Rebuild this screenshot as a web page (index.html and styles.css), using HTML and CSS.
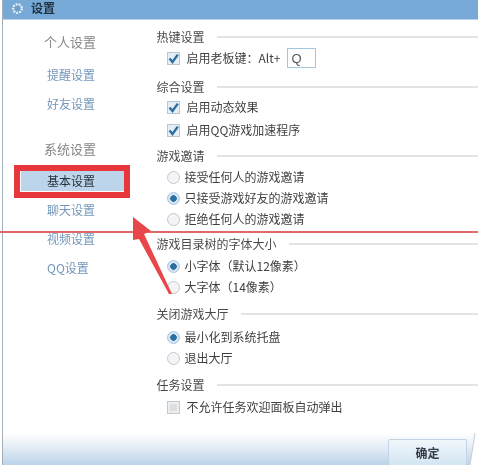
FILE: index.html
```html
<!DOCTYPE html>
<html lang="zh-CN">
<head>
<meta charset="utf-8">
<title>设置</title>
<link rel="stylesheet" href="styles.css">
</head>
<body>
<div class="window">
  <header class="titlebar">
    <svg class="gear" viewBox="0 0 16 16" width="15" height="15"><circle cx="8" cy="8" r="4.6" fill="none" stroke="#e4eef6" stroke-width="2.6" stroke-dasharray="2 1.2"/><circle cx="8" cy="8" r="3" fill="#6f9fc8"/></svg>
    <span class="title">设置</span>
  </header>
  <div class="content">
    <nav class="sidebar">
      <div class="group-title first">个人设置</div>
      <a class="link l1">提醒设置</a>
      <a class="link l2">好友设置</a>
      <div class="group-title second">系统设置</div>
      <a class="link active">基本设置</a>
      <a class="link l3">聊天设置</a>
      <a class="link l3">视频设置</a>
      <a class="link l3">QQ设置</a>
    </nav>
    <main class="main">
      <div class="head">热键设置</div>
      <div class="row mt3">
        <svg class="check" viewBox="0 0 13 13"><rect x=".5" y=".5" width="12" height="12" fill="#e6eef5" stroke="#b9c7d3"/><path d="M2.5 6.5 5.5 10 10.8 2.6" fill="none" stroke="#2f6f9f" stroke-width="2.4"/></svg>
        <span>启用老板键：Alt+</span>
        <input class="key" type="text" value="Q">
      </div>
      <div class="head mt11">综合设置</div>
      <div class="row mt2">
        <svg class="check" viewBox="0 0 13 13"><rect x=".5" y=".5" width="12" height="12" fill="#e6eef5" stroke="#b9c7d3"/><path d="M2.5 6.5 5.5 10 10.8 2.6" fill="none" stroke="#2f6f9f" stroke-width="2.4"/></svg>
        <span>启用动态效果</span>
      </div>
      <div class="row mt5">
        <svg class="check" viewBox="0 0 13 13"><rect x=".5" y=".5" width="12" height="12" fill="#e6eef5" stroke="#b9c7d3"/><path d="M2.5 6.5 5.5 10 10.8 2.6" fill="none" stroke="#2f6f9f" stroke-width="2.4"/></svg>
        <span>启用QQ游戏加速程序</span>
      </div>
      <div class="head mt8">游戏邀请</div>
      <div class="row radio-row mt3"><i class="radio"></i><span>接受任何人的游戏邀请</span></div>
      <div class="row radio-row mt3"><i class="radio on"></i><span>只接受游戏好友的游戏邀请</span></div>
      <div class="row radio-row mt3"><i class="radio"></i><span>拒绝任何人的游戏邀请</span></div>
      <div class="head mt7">游戏目录树的字体大小</div>
      <div class="row radio-row mt4"><i class="radio on"></i><span>小字体（默认12像素）</span></div>
      <div class="row radio-row mt3"><i class="radio"></i><span>大字体（14像素）</span></div>
      <div class="head mt9">关闭游戏大厅</div>
      <div class="row radio-row mt5"><i class="radio on"></i><span>最小化到系统托盘</span></div>
      <div class="row radio-row mt3"><i class="radio"></i><span>退出大厅</span></div>
      <div class="head mt9">任务设置</div>
      <div class="row mt4">
        <svg class="check" viewBox="0 0 13 13"><rect x=".5" y=".5" width="12" height="12" fill="#eceef0" stroke="#c4c8cc"/><rect x="3" y="3" width="7" height="7" fill="#dcdfe2"/></svg>
        <span>不允许任务欢迎面板自动弹出</span>
      </div>
    </main>
  </div>
  <footer class="footer"><button class="ok">确定</button></footer>
</div>
<div class="mark-box"></div>
<div class="mark-line"></div>
<svg class="mark-arrow" viewBox="0 0 60 90" width="60" height="90"><polygon points="11,2 29,16 22,19 50,79 47,79 17,24 11,25" fill="#e8474a"/></svg>
<svg class="corner" viewBox="0 0 10 32" width="10" height="32"><polygon points="7,0 10,0 10,32 2,32" fill="#fff"/><path d="M7 0 2 32" stroke="#c4ccd2" fill="none"/></svg>
</body>
</html>
```
FILE: styles.css
```css
* { box-sizing: border-box; }
html, body { margin: 0; height: 100%; overflow: hidden; background: #fff; }
body { font-family: "Noto Sans CJK SC", "Liberation Sans", sans-serif; font-size: 12px; color: #3f3f3f; position: relative; filter: blur(.55px); }
.window { width: 476px; height: 465px; margin-left: 2px; border-left: 1.5px solid #a3aeb8; display: flex; flex-direction: column; }
.titlebar { height: 20px; flex: none; background: #76a9d5; border-bottom: 1px solid #b9d2e8; display: flex; align-items: center; padding: 0 0 3px 7px; gap: 6px; }
.title { font-weight: 700; color: #1f3040; font-size: 12px; line-height: 14px; }
.gear { flex: none; }
.content { flex: 1; display: flex; min-height: 0; }
.sidebar { width: 153.5px; flex: none; display: flex; flex-direction: column; align-items: stretch; padding-left: 18px; padding-right: 31px; }
.group-title { height: 20px; line-height: 20px; font-size: 13px; color: #868686; padding-left: 23px; white-space: nowrap; }
.group-title.first { margin-top: 12px; }
.group-title.second { margin-top: 25px; }
.link { height: 20px; line-height: 20px; color: #7397ba; padding-left: 26px; display: block; white-space: nowrap; }
.l1 { margin-top: 13px; }
.l2 { margin-top: 9px; }
.l3 { margin-top: 9px; }
.active { margin-top: 12px; background: #bdd5ea; color: #26323c; }
.main { flex: 1; padding-top: 8px; display: flex; flex-direction: column; }
.head { height: 18px; line-height: 18px; color: #4a4a4a; display: flex; align-items: center; gap: 12px; white-space: nowrap; }
.head::after { content: ""; flex: 1; height: 2px; background: #e4e4e4; }
.row { height: 18px; line-height: 18px; display: flex; align-items: center; padding-left: 10px; white-space: nowrap; }
.row span { margin-left: 7px; }
.radio-row span { margin-left: 5px; }
.check { width: 13px; height: 13px; flex: none; }
.radio { width: 13px; height: 13px; flex: none; border-radius: 50%; border: 1px solid #c2c9cf; background: #f2f4f6; }
.radio.on { border-color: #a9c6dd; background: radial-gradient(circle, #2f6f9f 0 3px, #d5e5f2 3.5px); }
.key { width: 29px; height: 20px; margin-left: 7px; padding: 0 0 0 3px; border: 1px solid #a5c6df; font: 13px "Liberation Sans", sans-serif; color: #555; background: #fff; }
.mt2 { margin-top: 2px; } .mt3 { margin-top: 3px; } .mt4 { margin-top: 4px; } .mt5 { margin-top: 5px; }
.mt7 { margin-top: 7px; } .mt8 { margin-top: 8px; } .mt9 { margin-top: 9px; } .mt11 { margin-top: 11px; }
.footer { height: 32px; flex: none; background: linear-gradient(#fff, #eaf1f7 35%, #bcd3ea); display: flex; justify-content: flex-end; align-items: flex-end; padding-right: 11px; }
.ok { width: 79px; height: 26px; border: 1px solid #c3d5e4; border-bottom: 0; border-radius: 2px; background: linear-gradient(#f1f7fb, #d2e5f3); color: #333c45; font: 700 12px "Noto Sans CJK SC", sans-serif; padding: 0; }
.mark-box { position: absolute; left: 14px; top: 165px; width: 116px; height: 33px; border: 6px solid #e8373c; }
.mark-line { position: absolute; left: 0; top: 231px; width: 478px; height: 2px; background: #e2696b; }
.mark-arrow { position: absolute; left: 122px; top: 215px; }
.corner { position: absolute; right: 0; bottom: 0; }
```
